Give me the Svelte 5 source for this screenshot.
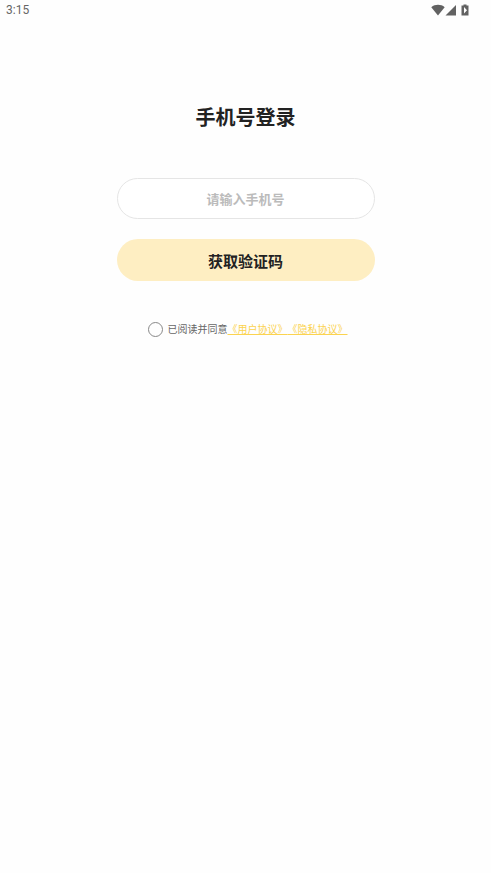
<script lang="ts">
  let phone = $state('');
  let agreed = $state(false);
</script>

<div class="page">
  <header class="status">
    <span>3:15</span>
    <div class="icons">
      <svg width="14" height="12" viewBox="0 0 14 12"><path d="M7 11.5 0.3 3.2C4 0 10 0 13.7 3.2Z" /></svg>
      <svg width="12" height="12" viewBox="0 0 12 12"><path d="M0.5 11.5 11 1V11.5Z" /></svg>
      <svg class="battery" width="8" height="12" viewBox="0 0 8 12">
        <path fill-rule="evenodd" d="M2.5 0.5H5.5V1.5H7.5V11.5H0.5V1.5H2.5ZM3 3V9.5L6 6.3Z" />
      </svg>
    </div>
  </header>

  <main>
    <h1>手机号登录</h1>
    <form onsubmit={(e) => e.preventDefault()}>
      <input class="phone" type="tel" bind:value={phone} placeholder="请输入手机号" aria-label="手机号" />
      <button class="submit" type="submit">获取验证码</button>
    </form>
    <div class="agreement">
      <input id="agree" type="checkbox" bind:checked={agreed} />
      <label for="agree">已阅读并同意</label>
      <a href="#user">《用户协议》</a>
      <a href="#privacy">《隐私协议》</a>
    </div>
  </main>
</div>

<style>
  :global(body) {
    background: #fefefe;
  }
  .page {
    font-family: Roboto, "Noto Sans CJK SC", sans-serif;
    color: #222;
  }
  .status {
    display: flex;
    justify-content: space-between;
    align-items: center;
    height: 20px;
    padding: 0 22px 0 6px;
    font-size: 12px;
    color: #666;
  }
  .icons {
    display: flex;
    align-items: center;
    fill: #626262;
  }
  .battery {
    margin-left: 4px;
  }
  main {
    display: flex;
    flex-direction: column;
    align-items: center;
    padding: 82px 24px 24px;
  }
  h1 {
    margin: 0 0 44px;
    font-size: 20px;
    line-height: 32px;
    font-weight: 700;
  }
  form {
    display: flex;
    flex-direction: column;
    gap: 20px;
    width: 100%;
    max-width: 258px;
  }
  .phone,
  .submit {
    box-sizing: border-box;
    width: 100%;
    margin: 0;
    border-radius: 21px;
    font-family: inherit;
    font-weight: 700;
    text-align: center;
  }
  .phone {
    height: 41px;
    padding: 2px 20px 0;
    border: 1px solid #e5e5e5;
    background: #fff;
    color: #222;
    font-size: 13px;
  }
  .phone::placeholder {
    color: #bbb;
    opacity: 1;
  }
  .submit {
    height: 42px;
    padding: 0 20px;
    border: none;
    background: #feeec2;
    color: #222;
    font-size: 15px;
    cursor: pointer;
  }
  .agreement {
    display: flex;
    align-items: center;
    margin-top: 39px;
    padding-left: 4px;
    font-size: 10px;
    line-height: 20px;
    color: #666;
  }
  .agreement input {
    appearance: none;
    width: 15px;
    height: 15px;
    margin: 0 5px 2px 0;
    border: 1px solid #888;
    border-radius: 50%;
  }
  .agreement input:checked {
    background: #fbd34f;
  }
  .agreement a {
    color: #fbd34f;
  }
</style>
